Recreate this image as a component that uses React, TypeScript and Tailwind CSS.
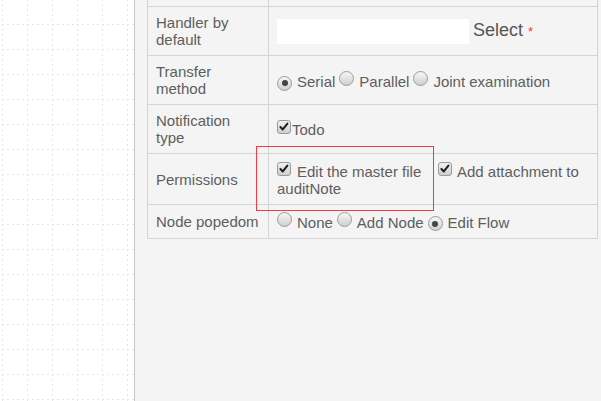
type Option = {
    label: string
    checked?: boolean
}

const TRANSFER_OPTIONS: Option[] = [
    { label: 'Serial', checked: true },
    { label: 'Parallel' },
    { label: 'Joint examination' },
]

const POPEDOM_OPTIONS: Option[] = [
    { label: 'None' },
    { label: 'Add Node' },
    { label: 'Edit Flow', checked: true },
]

function Radio({ checked }: { checked?: boolean }) {
    return (
        <span className="mr-[5px] inline-flex h-[15px] w-[15px] items-center justify-center rounded-full border border-[#9c9c9c] bg-linear-to-b from-[#f7f7f7] to-[#cfcfcf] align-[1px]">
            {checked && <span className="h-[6px] w-[6px] rounded-full bg-[#444]" />}
        </span>
    )
}

function Checkbox({ className }: { className?: string }) {
    return (
        <span
            className={
                'inline-block h-[14px] w-[14px] rounded-[3px] border border-[#9a9a9a] bg-linear-to-b from-[#f2f2f2] to-[#cdcdcd] align-[1px] ' +
                (className ?? '')
            }
        >
            <svg viewBox="0 0 13 13" className="h-full w-full">
                <path d="M2.6 6.6 L5.2 9.2 L10.2 2.8" fill="none" stroke="#1e1e1e" strokeWidth="2.2" strokeLinecap="round" strokeLinejoin="round" />
            </svg>
        </span>
    )
}

function Row({ label, height, top = true, children }: { label?: string; height: string; top?: boolean; children?: React.ReactNode }) {
    return (
        <div className={'flex border-[#d4d4d4] ' + height + (top ? ' border-t' : '')}>
            <div className="flex w-[121px] shrink-0 items-center whitespace-pre-line border-r border-[#d4d4d4] px-[8px]">{label}</div>
            <div className="flex flex-1 items-center pl-[8px]">{children}</div>
        </div>
    )
}

function GridCanvas() {
    return (
        <svg className="h-full w-full">
            <defs>
                <pattern id="grid" width="25" height="25" x="2" y="-1" patternUnits="userSpaceOnUse">
                    <line x1="0.5" y1="0" x2="0.5" y2="25" stroke="#e6e6e6" strokeDasharray="2 3" />
                    <line x1="0" y1="0.5" x2="25" y2="0.5" stroke="#e6e6e6" strokeDasharray="2 3" />
                </pattern>
            </defs>
            <rect width="100%" height="100%" fill="url(#grid)" />
        </svg>
    )
}

export default function App() {
    return (
        <div className="flex h-[401px] w-[601px] overflow-hidden bg-white font-['Liberation_Sans',Arial,sans-serif] text-[15px] leading-[17px] text-[#5e5e5e]">
            <div className="h-full w-[134px] shrink-0">
                <GridCanvas />
            </div>

            <div className="relative h-full flex-1 border-l border-[#c8c8c8] bg-[#f4f4f4] pl-[12px]">
                <div className="w-[451px] border-x border-b border-[#d4d4d4]">
                    <Row height="h-[6px]" top={false} />

                    <Row label={'Handler by\ndefault'} height="h-[49px]">
                        <input className="h-[25px] w-[192px] bg-white outline-none" />
                        <span className="ml-[4px] text-[18px] leading-[20px] text-[#555]">
                            Select
                            <span className="ml-[5px] text-[13px] text-[#e8413d]">*</span>
                        </span>
                    </Row>

                    <Row label={'Transfer\nmethod'} height="h-[49px]">
                        <div className="pt-[2px]">
                            {TRANSFER_OPTIONS.map((opt) => (
                                <span key={opt.label} className="mr-[4px]">
                                    <Radio checked={opt.checked} />
                                    {opt.label}
                                </span>
                            ))}
                        </div>
                    </Row>

                    <Row label={'Notification\ntype'} height="h-[49px]">
                        <div>
                            <Checkbox className="mr-[1px]" />
                            Todo
                        </div>
                    </Row>

                    <Row label="Permissions" height="h-[51px]">
                        <div className="flex items-start">
                            <div className="w-[160px]">
                                <Checkbox className="mr-[6px]" />
                                Edit the master file auditNote
                            </div>
                            <div className="pl-[1px]">
                                <Checkbox className="mr-[5px]" />
                                Add attachment to
                            </div>
                        </div>
                    </Row>

                    <Row label="Node popedom" height="h-[34px] whitespace-nowrap">
                        <div>
                            {POPEDOM_OPTIONS.map((opt) => (
                                <span key={opt.label} className="mr-[4px]">
                                    <Radio checked={opt.checked} />
                                    {opt.label}
                                </span>
                            ))}
                        </div>
                    </Row>
                </div>

                {/* highlight around the master-file permission */}
                <div className="absolute left-[121px] top-[146px] h-[65px] w-[178px] border border-[#f03c3c]" />
            </div>
        </div>
    )
}
